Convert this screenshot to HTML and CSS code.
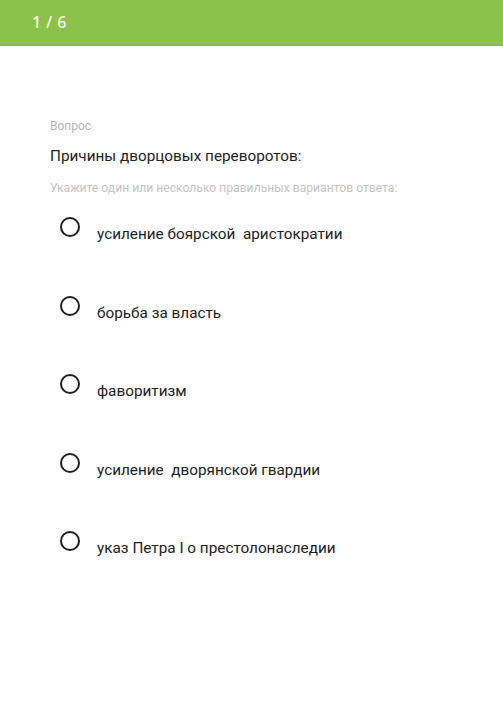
FILE: index.html
```html
<!DOCTYPE html>
<html lang="ru">
<head>
<meta charset="utf-8">
<link rel="stylesheet" href="styles.css">
</head>
<body>
<header class="topbar"><span class="counter">1 / 6</span></header>
<main class="quiz">
  <div class="label">Вопрос</div>
  <div class="question">Причины дворцовых переворотов:</div>
  <div class="hint">Укажите один или несколько правильных вариантов ответа:</div>
  <ul class="options">
    <li class="option"><span class="radio"></span><span class="text">усиление боярской&nbsp; аристократии</span></li>
    <li class="option"><span class="radio"></span><span class="text">борьба за власть</span></li>
    <li class="option"><span class="radio"></span><span class="text">фаворитизм</span></li>
    <li class="option"><span class="radio"></span><span class="text">усиление&nbsp; дворянской гвардии</span></li>
    <li class="option"><span class="radio"></span><span class="text">указ Петра I о престолонаследии</span></li>
  </ul>
</main>
</body>
</html>
```
FILE: styles.css
```css
html, body {
  margin: 0;
  padding: 0;
  background: #fff;
}
body {
  font-family: Roboto, "Noto Sans", sans-serif;
  color: #222;
}
.topbar {
  height: 44px;
  background: #8bc34a;
  border-bottom: 2px solid #86b94a;
  display: flex;
  align-items: center;
  padding-left: 32px;
}
.counter {
  font-family: "Open Sans", sans-serif;
  font-weight: 600;
  font-size: 16px;
  color: #f2f9e6;
  letter-spacing: 0.4px;
}
.quiz {
  padding: 72px 50px 0 50px;
}
.label {
  font-size: 12px;
  line-height: 16px;
  color: #b5b5b5;
}
.question {
  margin-top: 12px;
  font-size: 15.3px;
  line-height: 20px;
  color: #222;
}
.hint {
  margin-top: 14px;
  font-size: 12.15px;
  line-height: 16px;
  color: #c4c4c4;
}
.options {
  list-style: none;
  margin: 21px 0 0 0;
  padding: 0 0 0 10px;
}
.option {
  display: flex;
  align-items: flex-start;
  gap: 17px;
  height: 78.5px;
}
.radio {
  width: 16px;
  height: 16px;
  border: 2px solid #1f1f1f;
  border-radius: 50%;
  flex: none;
}
.text {
  margin-top: 7px;
  font-size: 15.3px;
  line-height: 20px;
  color: #222;
}
```
